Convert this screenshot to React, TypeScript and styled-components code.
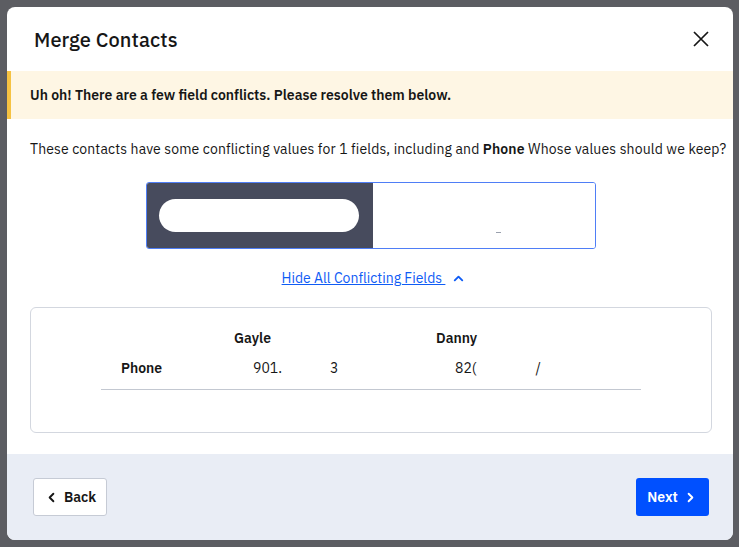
import React, { useState } from "react"
import styled, { createGlobalStyle } from "styled-components"
import { ChevronUp, ChevronLeft, ChevronRight } from "lucide-react"

const GlobalStyle = createGlobalStyle`
	html, body {
		margin: 0;
		padding: 0;
		background: #5c5d62;
	}
	body {
		font-family: "IBM Plex Sans", Roboto, "Noto Sans", sans-serif;
		color: #161616;
	}
	* {
		box-sizing: border-box;
	}
`

const contacts = [
	{ name: "Gayle", phoneStart: "901.", phoneEnd: "3", gap: 48 },
	{ name: "Danny", phoneStart: "82(", phoneEnd: "/", gap: 59 },
]

const App: React.FC = () => {
	const [selected, setSelected] = useState(0)
	const [open, setOpen] = useState(true)

	return (
		<Overlay>
			<GlobalStyle />
			<Modal>
				<Header>
					<Title>Merge Contacts</Title>
					<CloseButton aria-label="Close">
						<svg width="16" height="16" viewBox="0 0 16 16">
							<path d="M1 1 L15 15 M15 1 L1 15" stroke="#161616" strokeWidth="1.7" fill="none" />
						</svg>
					</CloseButton>
				</Header>

				<Banner>Uh oh! There are a few field conflicts. Please resolve them below.</Banner>

				<Body>
					<Intro>
						These contacts have some conflicting values for 1 fields, including and <b>Phone</b> Whose
						values should we keep?
					</Intro>

					<Toggle>
						{contacts.map((c, index) => (
							<ToggleOption key={c.name} $active={index === selected} onClick={() => setSelected(index)}>
								{index === selected ? <Pill /> : <Dash />}
							</ToggleOption>
						))}
					</Toggle>

					<HideLink onClick={() => setOpen(!open)}>
						<span>Hide All Conflicting Fields </span>
						<ChevronUp size={15} strokeWidth={3} />
					</HideLink>

					<Card>
						<Table>
							<HeadCell />
							{contacts.map((c) => (
								<HeadCell key={c.name}>{c.name}</HeadCell>
							))}
							<LabelCell>Phone</LabelCell>
							{contacts.map((c) => (
								<ValueCell key={c.name}>
									{c.phoneStart}
									<Tail $gap={c.gap}>{c.phoneEnd}</Tail>
								</ValueCell>
							))}
						</Table>
					</Card>
				</Body>

				<Footer>
					<BackButton>
						<ChevronLeft size={15} strokeWidth={3} />
						Back
					</BackButton>
					<NextButton>
						Next
						<ChevronRight size={15} strokeWidth={3} />
					</NextButton>
				</Footer>
			</Modal>
		</Overlay>
	)
}

const Overlay = styled.div`
	height: 547px;
	padding: 7px 6px 7px 7px;
`

const Modal = styled.div`
	width: 726px;
	height: 533px;
	background: #fff;
	border-radius: 8px;
	overflow: hidden;
	display: flex;
	flex-direction: column;
`

const Header = styled.div`
	height: 64px;
	display: flex;
	align-items: center;
	justify-content: space-between;
	padding: 0 24px 0 27px;
`

const Title = styled.h2`
	margin: 0;
	font-size: 20px;
	font-weight: 500;
	letter-spacing: 0.1px;
`

const CloseButton = styled.button`
	border: none;
	background: none;
	padding: 0;
	width: 16px;
	height: 16px;
	display: flex;
	cursor: pointer;
`

const Banner = styled.div`
	height: 48px;
	display: flex;
	align-items: center;
	background: #fef6e4;
	border-left: 4px solid #f5c242;
	padding-left: 19px;
	font-size: 14px;
	font-weight: 600;
`

const Body = styled.div`
	flex: 1;
	display: flex;
	flex-direction: column;
	padding: 19px 21px 0 23px;
`

const Intro = styled.p`
	margin: 0;
	font-size: 14px;
	line-height: 22px;
	letter-spacing: 0.13px;
	white-space: nowrap;
	b {
		font-weight: 600;
	}
`

const Toggle = styled.div`
	align-self: center;
	margin-top: 22px;
	width: 450px;
	height: 67px;
	border: 1px solid #4f7ef6;
	border-radius: 3px;
	display: flex;
	overflow: hidden;
`

const ToggleOption = styled.div<{ $active: boolean }>`
	flex: 1;
	display: flex;
	align-items: center;
	justify-content: ${(p) => (p.$active ? "flex-start" : "center")};
	padding: 0 14px 0 12px;
	background: ${(p) => (p.$active ? "#474b5d" : "#fff")};
	cursor: pointer;
`

const Pill = styled.div`
	width: 200px;
	height: 33px;
	border-radius: 17px;
	background: #fff;
`

const Dash = styled.div`
	width: 5px;
	height: 1px;
	background: #9aa0ad;
	margin: 34px 0 0 30px;
`

const HideLink = styled.a`
	align-self: center;
	margin: 20px 0 0 6px;
	display: flex;
	align-items: center;
	gap: 6px;
	color: #0f5cf5;
	font-size: 14px;
	cursor: pointer;
	span {
		text-decoration: underline;
		white-space: pre;
	}
`

const Card = styled.div`
	margin-top: 20px;
	height: 126px;
	border: 1px solid #d3d7df;
	border-radius: 6px;
	padding: 15px 70px 0;
`

const Table = styled.div`
	display: grid;
	grid-template-columns: 133px 202px 1fr;
	grid-auto-rows: 30px;
	border-bottom: 1px solid #c3c8d1;
	padding-bottom: 6px;
	font-size: 14px;
`

const HeadCell = styled.div`
	display: flex;
	align-items: center;
	font-weight: 600;
`

const LabelCell = styled(HeadCell)`
	padding-left: 20px;
`

const ValueCell = styled.div`
	display: flex;
	align-items: center;
	padding-left: 19px;
`

const Tail = styled.span<{ $gap: number }>`
	margin-left: ${(p) => p.$gap}px;
`

const Footer = styled.div`
	height: 86px;
	background: #e9edf5;
	display: flex;
	align-items: center;
	justify-content: space-between;
	padding: 0 24px 0 26px;
`

const BaseButton = styled.button`
	height: 38px;
	border-radius: 3px;
	display: flex;
	align-items: center;
	gap: 5px;
	font-family: inherit;
	font-size: 14px;
	font-weight: 600;
	cursor: pointer;
`

const BackButton = styled(BaseButton)`
	width: 74px;
	padding: 0 0 0 10px;
	background: #fff;
	border: 1px solid #c6cbd5;
	color: #161616;
`

const NextButton = styled(BaseButton)`
	width: 73px;
	justify-content: center;
	background: #0050ff;
	border: none;
	color: #fff;
`

export default App
